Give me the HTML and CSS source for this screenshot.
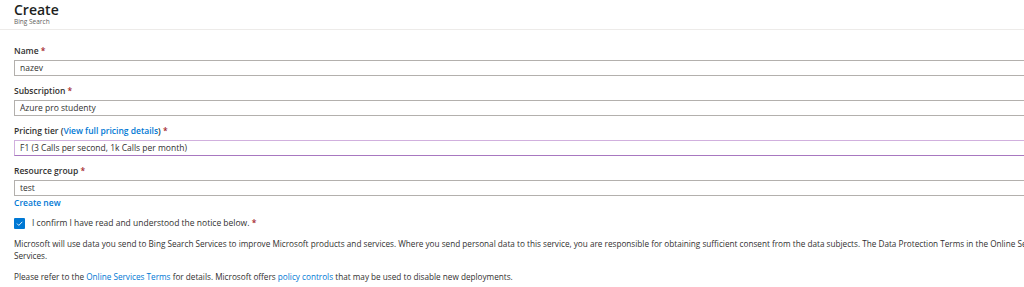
FILE: index.html
```html
<!DOCTYPE html>
<html>
<head>
<meta charset="utf-8">
<link rel="stylesheet" href="styles.css">
</head>
<body>
<header class="head">
  <h1 class="title">Create</h1>
  <div class="subtitle">Bing Search</div>
</header>
<main class="form">
  <div class="field">
    <label class="label">Name <span class="req">*</span></label>
    <div class="input">nazev</div>
  </div>
  <div class="field">
    <label class="label">Subscription <span class="req">*</span></label>
    <div class="input">Azure pro studenty</div>
  </div>
  <div class="field">
    <label class="label">Pricing tier (<a class="link strong">View full pricing details</a>) <span class="req">*</span></label>
    <div class="input focus">F1 (3 Calls per second, 1k Calls per month)</div>
  </div>
  <div class="field last">
    <label class="label">Resource group <span class="req">*</span></label>
    <div class="input">test</div>
    <a class="link strong create">Create new</a>
  </div>
  <div class="check">
    <span class="box"><svg width="11" height="11" viewBox="0 0 11 11"><path d="M3 5.6 L4.8 7.4 L8.3 3.8" fill="none" stroke="#fff" stroke-width="0.9"/></svg></span>
    <span>I confirm I have read and understood the notice below. <span class="req">*</span></span>
  </div>
  <p class="para">Microsoft will use data you send to Bing Search Services to improve Microsoft products and services. Where you send personal data to this service, you are responsible for obtaining sufficient consent from the data subjects. The Data Protection Terms in the Online Services Terms apply to Bing Search Services.</p>
  <p class="para">Please refer to the <a class="link">Online Services Terms</a> for details. Microsoft offers <a class="link">policy controls</a> that may be used to disable new deployments.</p>
</main>
</body>
</html>
```
FILE: styles.css
```css
html, body { margin: 0; padding: 0; background: #fff; overflow: hidden; }
body {
  font-family: "Open Sans", "Noto Sans", sans-serif;
  color: #323130;
  width: 1024px;
  height: 287px;
}
.head {
  padding: 2px 0 0 14px;
  height: 27px;
  border-bottom: 1px solid #edebe9;
}
.title {
  margin: 0;
  font-size: 14px;
  line-height: 16px;
  font-weight: 600;
  color: #201f1e;
}
.subtitle {
  font-size: 6.5px;
  line-height: 8px;
  color: #605e5c;
}
.form {
  padding: 15px 0 0 14px;
  width: 1165px;
}
.field {
  display: flex;
  flex-direction: column;
  margin-bottom: 9px;
}
.field .input { width: 1076px; }
.field.last { margin-bottom: 8px; }
.label {
  font-size: 8.5px;
  line-height: 12px;
  font-weight: 600;
  margin-bottom: 3px;
}
.req { color: #a4262c; font-weight: 600; }
.input {
  box-sizing: border-box;
  height: 16px;
  border: 1px solid #b3b0ad;
  font-size: 8.5px;
  line-height: 14px;
  padding-left: 5px;
}
.input.focus { border-color: #d1b0de; border-bottom-color: #a878c0; }
.link { color: #0078d4; text-decoration: none; }
.strong { font-weight: 600; }
.create { font-size: 8.5px; line-height: 12px; margin-top: 1px; }
.check {
  display: flex;
  align-items: center;
  gap: 7px;
  font-size: 8.5px;
  line-height: 12px;
}
.box {
  width: 11px;
  height: 11px;
  background: #0078d4;
  border-radius: 1px;
  display: flex;
}
.para {
  margin: 9px 0 0;
  font-size: 8.2px;
  line-height: 12px;
}
.para + .para { margin-top: 9px; }
```
